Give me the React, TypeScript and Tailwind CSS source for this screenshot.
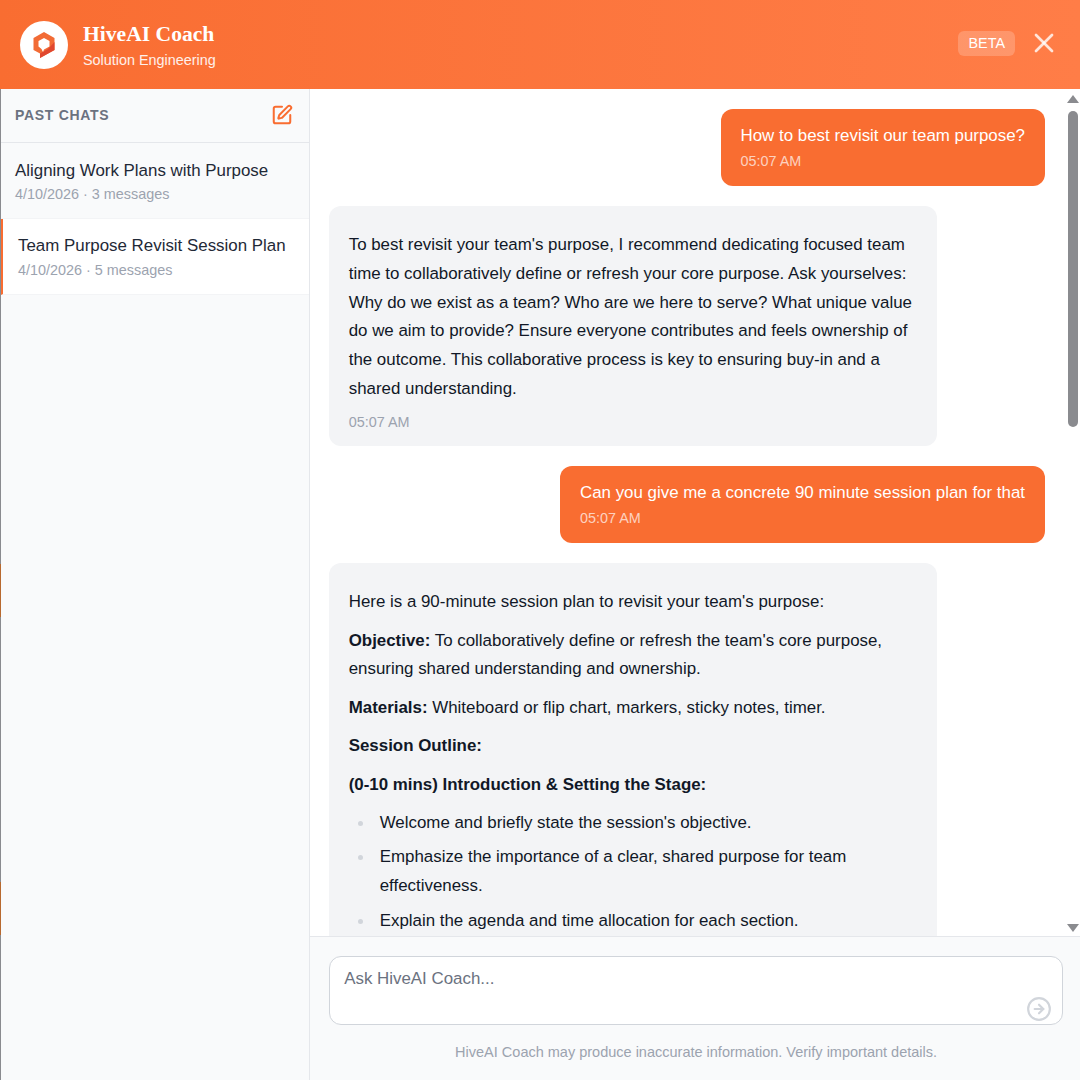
import { X, SquarePen, CircleArrowRight } from "lucide-react";

const pastChats = [
  { title: "Aligning Work Plans with Purpose", meta: "4/10/2026 · 3 messages", active: false },
  { title: "Team Purpose Revisit Session Plan", meta: "4/10/2026 · 5 messages", active: true },
];

const HiveLogo = () => (
  <svg width="24" height="28" viewBox="0 0 24 28">
    <path d="M12 1 L22.5 7 V19 L8 27 V22.5 L1.5 19 V7 Z" fill="#f26b35" />
    <path d="M22.5 11 V19 L8 27 V22.5 L16 18 Z" fill="#e0472f" />
    <path d="M12 7 L17.5 10 V15.5 L12 18.5 L11 21 L9.5 18 L6.5 15.5 V10 Z" fill="#fff" />
  </svg>
);

const UserBubble = ({ text, time }: { text: string; time: string }) => (
  <div className="flex justify-end">
    <div className="rounded-xl bg-[#f96d31] px-5 pt-[15px] pb-[13px] text-white">
      <p className="text-[16.9px] leading-[24px]">{text}</p>
      <p className="mt-[1px] text-[14.4px] leading-[24px] text-white/70">{time}</p>
    </div>
  </div>
);

const Bullet = ({ text, first }: { text: string; first?: boolean }) => (
  <li className={first ? "flex" : "mt-[5.6px] flex"}>
    <span className="mt-[12px] h-[5px] w-[5px] shrink-0 rounded-full bg-[#d1d5db]" />
    <span className="ml-[17px]">{text}</span>
  </li>
);

const App = () => {
  return (
    <div className="flex h-[1080px] w-[1080px] flex-col overflow-hidden bg-white font-['Liberation_Sans',sans-serif] text-[#111827]">
      {/* Header */}
      <header className="flex h-[89px] shrink-0 items-center justify-between bg-gradient-to-r from-[#f96d31] to-[#ff7d47] pr-5 pl-5">
        <div className="flex items-center gap-[15px]">
          <div className="flex h-12 w-12 items-center justify-center rounded-full bg-white">
            <HiveLogo />
          </div>
          <div>
            <h1 className="font-['Liberation_Serif',serif] text-[21.6px] leading-[28px] font-bold text-white">HiveAI Coach</h1>
            <p className="mt-[2px] text-[14.4px] leading-[20px] text-white/90">Solution Engineering</p>
          </div>
        </div>
        <div className="mb-[3px] flex items-center gap-[13px]">
          <span className="rounded-md bg-white/20 px-[10px] py-[3px] text-[14.4px] leading-[19px] text-white">BETA</span>
          <X size={32} strokeWidth={2} className="text-white/80" />
        </div>
      </header>

      <div className="flex min-h-0 flex-1">
        {/* Page behind the panel shows through on the far left */}
        <div className="flex w-px shrink-0 flex-col bg-[#8a8b8f]">
          <div className="h-[475px]" />
          <div className="h-[53px] bg-[#b8692f]" />
          <div className="h-[265px]" />
          <div className="h-[53px] bg-[#b8692f]" />
        </div>

        {/* Sidebar */}
        <aside className="flex w-[309px] shrink-0 flex-col border-r border-[#e5e7eb] bg-[#f9fafb]">
          <div className="flex h-[54px] shrink-0 items-center justify-between border-b border-[#e5e7eb] pr-4 pb-[2px] pl-[14px]">
            <span className="text-sm font-bold tracking-[0.7px] text-[#6b7280]">PAST CHATS</span>
            <SquarePen size={22} strokeWidth={2.2} className="text-[#f96d31]" />
          </div>
          {pastChats.map((chat) => (
            <div
              key={chat.title}
              className={
                chat.active
                  ? "h-[76px] border-b border-l-[2px] border-b-[#f3f4f6] border-l-[#f96d31] bg-white pt-[15px] pl-[15px]"
                  : "h-[76px] border-b border-[#f3f4f6] pt-4 pl-[14px]"
              }
            >
              <p className="text-[16.9px] leading-[24px] text-[#1f2937]">{chat.title}</p>
              <p className={chat.active ? "mt-[2px] text-[14.4px] leading-[20px] text-[#9ca3af]" : "mt-[1px] text-[14.4px] leading-[20px] text-[#9ca3af]"}>
                {chat.meta}
              </p>
            </div>
          ))}
        </aside>

        {/* Chat */}
        <main className="flex min-w-0 flex-1 flex-col">
          <div className="flex min-h-0 flex-1">
            <div className="min-w-0 flex-1 overflow-hidden">
              <div className="flex flex-col gap-5 pt-5 pr-5 pl-[19.2px]">
                <UserBubble text="How to best revisit our team purpose?" time="05:07 AM" />

                <div className="w-[608px] rounded-xl bg-[#f3f4f6] px-[19.5px] pt-[25px] pb-[12px]">
                  <p className="text-[16.9px] leading-[28.8px]">
                    To best revisit your team's purpose, I recommend dedicating focused team time to collaboratively
                    define or refresh your core purpose. Ask yourselves: Why do we exist as a team? Who are we here to
                    serve? What unique value do we aim to provide? Ensure everyone contributes and feels ownership of
                    the outcome. This collaborative process is key to ensuring buy-in and a shared understanding.
                  </p>
                  <p className="mt-[6px] text-[14.4px] leading-[24px] text-[#9ca3af]">05:07 AM</p>
                </div>

                <UserBubble text="Can you give me a concrete 90 minute session plan for that" time="05:07 AM" />

                <div className="w-[608px] rounded-xl bg-[#f3f4f6] px-[19.5px] pt-[25.5px] pb-5 text-[16.9px] leading-[28.8px]">
                  <p>Here is a 90-minute session plan to revisit your team's purpose:</p>
                  <p className="mt-[9.6px]">
                    <strong>Objective:</strong> To collaboratively define or refresh the team's core purpose, ensuring
                    shared understanding and ownership.
                  </p>
                  <p className="mt-[9.6px]">
                    <strong>Materials:</strong> Whiteboard or flip chart, markers, sticky notes, timer.
                  </p>
                  <p className="mt-[9.6px]">
                    <strong>Session Outline:</strong>
                  </p>
                  <p className="mt-[9.6px]">
                    <strong>(0-10 mins) Introduction &amp; Setting the Stage:</strong>
                  </p>
                  <ul className="mt-[9.6px] pl-[9px]">
                    <Bullet first text="Welcome and briefly state the session's objective." />
                    <Bullet text="Emphasize the importance of a clear, shared purpose for team effectiveness." />
                    <Bullet text="Explain the agenda and time allocation for each section." />
                  </ul>
                </div>
              </div>
            </div>

            {/* Scrollbar */}
            <div className="flex w-[15px] shrink-0 flex-col items-center bg-white pt-[6px]">
              <div className="h-0 w-0 border-x-[6px] border-b-[8px] border-x-transparent border-b-[#8a8b8f]" />
              <div className="mt-2 h-[316px] w-[10px] rounded-full bg-[#8a8b8f]" />
              <div className="mt-auto mb-1 h-0 w-0 border-x-[6px] border-t-[8px] border-x-transparent border-t-[#8a8b8f]" />
            </div>
          </div>

          {/* Composer */}
          <div className="flex h-[144px] shrink-0 flex-col border-t border-[#e5e7eb] bg-[#f9fafb] pt-[19.2px] pr-[17px] pl-[19.2px]">
            <div className="relative h-[69px] rounded-xl border border-[#d1d5db] bg-white px-[14px] py-[10px]">
              <span className="text-[16.9px] leading-[24px] text-[#6b7280]">Ask HiveAI Coach...</span>
              <CircleArrowRight size={26} strokeWidth={2} className="absolute right-[10px] bottom-[2px] text-[#d1d5db]" />
            </div>
            <p className="mt-[17px] text-center text-[14.5px] leading-[20px] text-[#9ca3af]">
              HiveAI Coach may produce inaccurate information. Verify important details.
            </p>
          </div>
        </main>
      </div>
    </div>
  );
};

export default App;
